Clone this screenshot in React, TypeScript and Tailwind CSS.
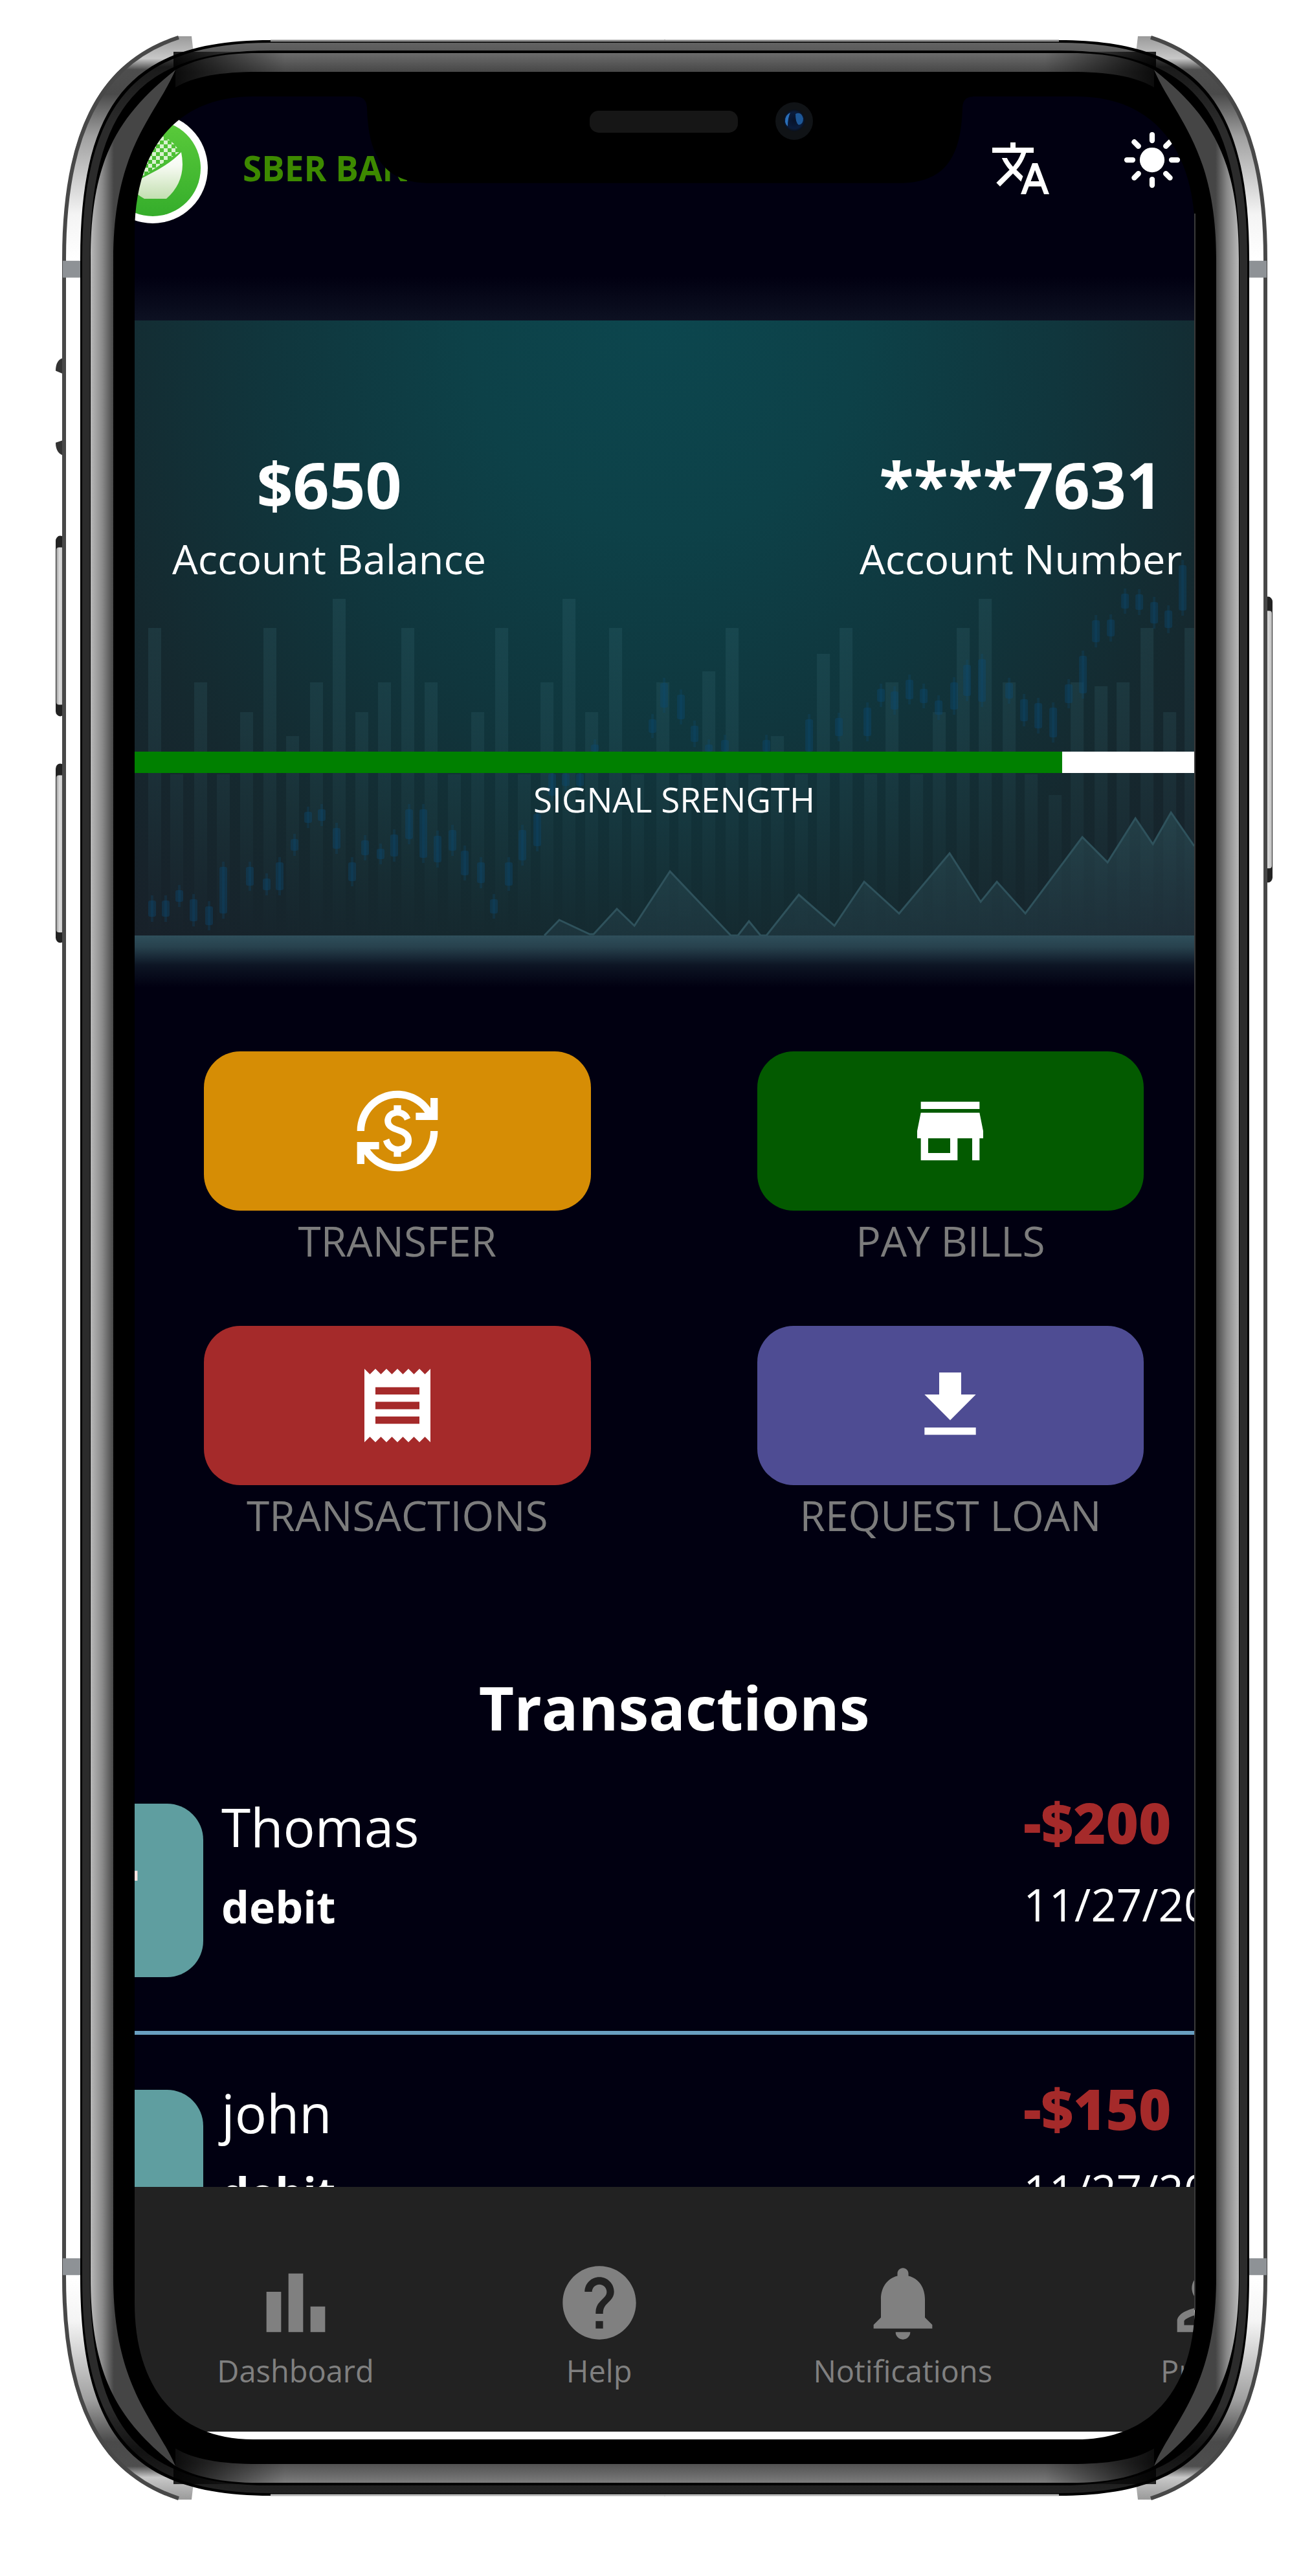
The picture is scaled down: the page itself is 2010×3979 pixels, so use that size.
import React from "react";
import { IoSunny } from "react-icons/io5";
import {
  MdCurrencyExchange,
  MdFileDownload,
  MdHelp,
  MdNotifications,
  MdPersonOutline,
  MdReceipt,
  MdStore,
  MdTranslate,
} from "react-icons/md";

/* ---------- Hero chart artwork ---------- */

// [x centre, top] of the pale vertical bars
const BARS: [number, number][] = [
  [31, 475], [209, 475], [316, 430], [422, 475], [567, 475], [671, 430], [743, 475],
  [102, 559], [173, 605], [244, 642], [281, 559], [351, 605], [386, 559], [458, 559],
  [530, 605], [637, 559], [706, 605], [65, 701], [137, 701], [494, 701], [602, 701], [777, 701],
  [923, 475], [1099, 475], [1280, 475], [1314, 430], [1564, 475], [1632, 475], [887, 542],
  [1064, 515], [1170, 559], [1243, 605], [1351, 559], [1456, 559], [1493, 565], [1527, 559],
  [1599, 605], [816, 559], [993, 642], [850, 701], [958, 701], [1030, 701], [1137, 701],
  [1208, 701], [1385, 701], [1422, 733],
];

// [x centre, top, bottom] of the blue candles
const CANDLES: [number, number, number][] = [
  [27, 896, 921], [48, 896, 921], [69, 880, 898], [91, 894, 928], [115, 905, 934],
  [137, 844, 916], [178, 844, 873], [204, 862, 880], [224, 837, 880], [247, 801, 819],
  [268, 759, 776], [289, 755, 773], [312, 784, 816], [336, 837, 866], [356, 803, 826],
  [380, 816, 832], [401, 794, 828], [424, 755, 801], [446, 755, 830], [468, 796, 837],
  [491, 787, 819], [510, 819, 857], [535, 837, 869], [555, 894, 916], [578, 837, 873],
  [599, 787, 834], [622, 762, 812], [645, 700, 734], [666, 700, 719], [688, 700, 719],
  [711, 655, 666], [800, 616, 637], [818, 560, 598], [844, 578, 616], [865, 626, 651],
  [887, 655, 666], [912, 648, 666], [976, 648, 666], [1042, 616, 666], [1088, 614, 642],
  [1132, 598, 642], [1153, 569, 589], [1174, 573, 601], [1197, 555, 585], [1219, 569, 591],
  [1242, 587, 609], [1266, 559, 601], [1286, 532, 580], [1309, 523, 589], [1351, 560, 584],
  [1374, 585, 619], [1396, 591, 630], [1419, 598, 644], [1443, 562, 591], [1465, 518, 576],
  [1485, 463, 497], [1508, 462, 488], [1530, 422, 445], [1552, 423, 447], [1575, 435, 468],
  [1597, 448, 475], [1619, 378, 448],
];

const RIDGE =
  "633,950 656,926 703,948 709,948 745,909 772,935 827,851 921,950 932,950 949,928 967,950 976,950 1026,887 1081,935 1127,867 1181,916 1259,823 1307,898 1332,867 1376,916 1464,798 1503,837 1546,769 1573,809 1601,760 1637,812";

function MarketArtwork() {
  return (
    <svg
      aria-hidden="true"
      className="absolute inset-0 h-full w-full"
      viewBox="0 0 1637 950"
      preserveAspectRatio="none"
    >
      <defs>
        <linearGradient id="barFade" x1="0" y1="430" x2="0" y2="950" gradientUnits="userSpaceOnUse">
          <stop offset="0" stopColor="#3f7580" stopOpacity="0.2" />
          <stop offset="0.4" stopColor="#3f7580" stopOpacity="0.16" />
          <stop offset="0.8" stopColor="#3f7580" stopOpacity="0.05" />
          <stop offset="1" stopColor="#3f7580" stopOpacity="0" />
        </linearGradient>
        <linearGradient id="ridgeFade" x1="0" y1="760" x2="0" y2="950" gradientUnits="userSpaceOnUse">
          <stop offset="0" stopColor="#2f5860" stopOpacity="0.5" />
          <stop offset="1" stopColor="#2a4652" stopOpacity="0.35" />
        </linearGradient>
      </defs>
      {BARS.map(([x, top]) => (
        <rect key={x} x={x - 10} y={top} width="20" height={950 - top} fill="url(#barFade)" />
      ))}
      {CANDLES.map(([x, top, bottom]) => (
        <g key={x} fill="#0b4a74">
          <rect x={x - 6} y={top} width="12" height={bottom - top} rx="3" opacity="0.38" />
          <rect x={x - 2} y={top - 8} width="4" height={bottom - top + 16} opacity="0.25" />
        </g>
      ))}
      <polygon points={RIDGE + " 1637,950"} fill="url(#ridgeFade)" />
      <polyline points={RIDGE} fill="none" stroke="#2f525c" strokeWidth="3" />
    </svg>
  );
}

/* ---------- Device frame artwork ---------- */

const QUARTER = {
  top: {
    body: "M1028 62H418C210 62 124 150 124 400V1962H208V360C208 240 265 149 391 149H547C560 149 566 153 567 166C569 235 588 283 665 283H1028Z",
    rim: "#8a8a8a",
    ring: "url(#ringTop)",
    band: "url(#bandTop)",
  },
  bottom: {
    body: "M1028 62H418C210 62 124 150 124 400V1962H208V360C208 240 265 149 391 149H1028Z",
    rim: "#b4b4b4",
    ring: "url(#ringBottom)",
    band: "url(#bandBottom)",
  },
};

function FrameQuarter({ end }: { end: "top" | "bottom" }) {
  const part = QUARTER[end];
  return (
    <g>
      {/* polished outer rail */}
      <path
        d="M97 1962V400C97 210 150 95 274 56H296L299 82C195 116 126 210 126 400V1962Z"
        fill="url(#railCurve)"
      />
      <path d="M99 1962V400C99 212 152 98 276 58" fill="none" stroke="#484848" strokeWidth="6" />
      <rect x="97" y="403" width="28" height="26" fill="#8e9296" />
      {/* black body around the screen */}
      <path d={part.body} fill="#000" />
      <path d="M1028 63H418" stroke={part.rim} strokeWidth="3" />
      <path
        d="M1028 72H418C216 72 133 160 133 400V1962"
        fill="none"
        stroke={part.ring}
        strokeWidth="12"
      />
      {/* inner bevel */}
      <path
        d="M1028 82H400C340 82 300 92 271 108V135C300 118 340 111 400 111H1028Z"
        fill={part.band}
      />
      <rect x="268" y="80" width="172" height="58" fill="url(#bandFade)" />
      <path
        d="M140 1962V400C140 250 180 180 271 108C240 180 175 230 175 400V1962Z"
        fill="url(#sideBevel)"
      />
    </g>
  );
}

function DeviceFrame() {
  return (
    <svg
      aria-hidden="true"
      className="pointer-events-none absolute inset-0 h-full w-full"
      viewBox="0 0 2010 3979"
      preserveAspectRatio="none"
    >
      <defs>
        <linearGradient id="railCurve" x1="0" y1="56" x2="0" y2="400" gradientUnits="userSpaceOnUse">
          <stop offset="0" stopColor="#9a9a9a" />
          <stop offset="0.1" stopColor="#c8c8c8" />
          <stop offset="0.15" stopColor="#4e4e4e" />
          <stop offset="0.26" stopColor="#4a4a4a" />
          <stop offset="0.45" stopColor="#a0a0a0" />
          <stop offset="0.8" stopColor="#f4f4f4" />
          <stop offset="1" stopColor="#ffffff" />
        </linearGradient>
        <linearGradient id="ringTop" x1="0" y1="62" x2="0" y2="200" gradientUnits="userSpaceOnUse">
          <stop offset="0" stopColor="#666666" />
          <stop offset="0.12" stopColor="#5a5a5a" />
          <stop offset="0.3" stopColor="#1a1a1a" />
          <stop offset="1" stopColor="#2b2b2b" />
        </linearGradient>
        <linearGradient id="ringBottom" x1="0" y1="62" x2="0" y2="200" gradientUnits="userSpaceOnUse">
          <stop offset="0" stopColor="#242424" />
          <stop offset="0.5" stopColor="#121212" />
          <stop offset="1" stopColor="#2b2b2b" />
        </linearGradient>
        <linearGradient id="bandTop" x1="0" y1="82" x2="0" y2="111" gradientUnits="userSpaceOnUse">
          <stop offset="0" stopColor="#6c6c6c" />
          <stop offset="1" stopColor="#474747" />
        </linearGradient>
        <linearGradient id="bandBottom" x1="0" y1="82" x2="0" y2="113" gradientUnits="userSpaceOnUse">
          <stop offset="0" stopColor="#7c7c7c" />
          <stop offset="1" stopColor="#4f4f4f" />
        </linearGradient>
        <linearGradient id="bandFade" x1="268" y1="0" x2="440" y2="0" gradientUnits="userSpaceOnUse">
          <stop offset="0" stopColor="#000" stopOpacity="0.85" />
          <stop offset="1" stopColor="#000" stopOpacity="0" />
        </linearGradient>
        <linearGradient id="sideBevel" x1="140" y1="0" x2="176" y2="0" gradientUnits="userSpaceOnUse">
          <stop offset="0" stopColor="#b8b8b8" />
          <stop offset="0.5" stopColor="#8a8a8a" />
          <stop offset="1" stopColor="#454545" />
        </linearGradient>
        <linearGradient id="key" x1="0" y1="0" x2="1" y2="0">
          <stop offset="0" stopColor="#9a9a9a" />
          <stop offset="0.4" stopColor="#dcdcdc" />
          <stop offset="1" stopColor="#c0c0c0" />
        </linearGradient>
        <radialGradient id="lens">
          <stop offset="0" stopColor="#071229" />
          <stop offset="0.75" stopColor="#0a1c3c" />
          <stop offset="1" stopColor="#0b1018" />
        </radialGradient>
      </defs>

      {/* hardware keys */}
      <path d="M98 553Q86 556 86 573L98 578ZM98 680L86 684Q86 700 98 704Z" fill="#333" />
      <rect x="86" y="828" width="14" height="279" rx="8" fill="#222" />
      <rect x="87" y="846" width="12" height="243" rx="4" fill="url(#key)" />
      <rect x="86" y="1180" width="14" height="277" rx="8" fill="#222" />
      <rect x="87" y="1198" width="12" height="243" rx="4" fill="url(#key)" />
      <rect x="1952" y="922" width="14" height="442" rx="8" fill="#222" />
      <rect x="1953" y="944" width="12" height="398" rx="4" fill="url(#key)" />

      <FrameQuarter end="top" />
      <g transform="matrix(-1 0 0 1 2054 0)">
        <FrameQuarter end="top" />
      </g>
      <g transform="matrix(1 0 0 -1 0 3919)">
        <FrameQuarter end="bottom" />
      </g>
      <g transform="matrix(-1 0 0 -1 2054 3919)">
        <FrameQuarter end="bottom" />
      </g>
      <rect x="1845" y="330" width="2" height="3240" fill="#3a3a3a" />

      {/* speaker and camera */}
      <rect x="911" y="171" width="229" height="34" rx="14" fill="#161616" />
      <circle cx="1227" cy="187" r="29" fill="#101316" />
      <circle cx="1227" cy="186" r="17" fill="url(#lens)" />
      <path d="M1221 174Q1212 178 1213 188Q1214 193 1217 195Q1217 182 1221 174Z" fill="#2a6fb8" />
      <path d="M1229 176Q1238 172 1241 183Q1241 192 1234 193Q1229 190 1229 176Z" fill="#1d5796" />
    </svg>
  );
}

/* ---------- App screen ---------- */

function BankLogo() {
  return (
    <svg aria-hidden="true" viewBox="0 0 170 170" className="size-[170px] shrink-0">
      <defs>
        <linearGradient id="logoGreen" x1="0" y1="0" x2="0" y2="1">
          <stop offset="0" stopColor="#5bcb3b" />
          <stop offset="1" stopColor="#35ad2b" />
        </linearGradient>
        <linearGradient id="logoDisc" x1="0" y1="0" x2="0" y2="1">
          <stop offset="0" stopColor="#ffffff" />
          <stop offset="0.3" stopColor="#f6faf2" />
          <stop offset="1" stopColor="#c3dfb0" />
        </linearGradient>
        <pattern id="logoHatch" width="12" height="12" patternUnits="userSpaceOnUse">
          <rect width="6" height="6" fill="#d9f2cf" />
          <rect x="6" y="6" width="6" height="6" fill="#d9f2cf" />
        </pattern>
      </defs>
      <circle cx="85" cy="85" r="85" fill="#fff" />
      <circle cx="85" cy="85" r="74" fill="url(#logoGreen)" />
      <path d="M38 90A48 48 0 0 1 98 34Q120 44 126 60L66 100Z" fill="url(#logoHatch)" />
      <path d="M129 60Q138 104 106 132H72Q54 122 50 108Q62 104 80 94Q112 78 129 60Z" fill="url(#logoDisc)" />
    </svg>
  );
}

function BarChartIcon({ className }: { className?: string }) {
  return (
    <svg viewBox="0 0 24 24" fill="currentColor" aria-hidden="true" className={className}>
      <path d="M4 9h4v11H4zM16 13h4v7h-4zM10 4h4v16h-4z" />
    </svg>
  );
}

const ACTIONS = [
  { label: "TRANSFER", Icon: MdCurrencyExchange, color: "bg-[#d68d05]" },
  { label: "PAY BILLS", Icon: MdStore, color: "bg-[#035a00]" },
  { label: "TRANSACTIONS", Icon: MdReceipt, color: "bg-[#a52a2a]" },
  { label: "REQUEST LOAN", Icon: MdFileDownload, color: "bg-[#4e4c93]" },
];

const TRANSACTIONS = [
  { name: "Thomas", initial: "T", kind: "debit", amount: "-$200", date: "11/27/2021" },
  { name: "john", initial: "j", kind: "debit", amount: "-$150", date: "11/27/2021" },
];

const TABS = [
  { label: "Dashboard", Icon: BarChartIcon },
  { label: "Help", Icon: MdHelp },
  { label: "Notifications", Icon: MdNotifications },
  { label: "Profile", Icon: MdPersonOutline },
];

function Header() {
  return (
    <header className="bg-[linear-gradient(to_top,#0d1122,#010011_68px)] pt-[26px] pb-[150px]">
      <div className="flex items-center">
        <div className="-ml-[57px] flex shrink-0 items-center gap-[54px]">
          <BankLogo />
          <span className="text-[53px] leading-[60px] font-bold whitespace-nowrap text-[#3d8900]">
            SBER BANK
          </span>
        </div>
        <div className="ml-auto flex items-center gap-[107px] pr-[17px] text-white">
          <button type="button" aria-label="Change language">
            <MdTranslate className="size-24" />
          </button>
          <button type="button" aria-label="Toggle theme" className="pb-[26px]">
            <IoSunny className="size-24" />
          </button>
        </div>
      </div>
    </header>
  );
}

function Hero() {
  return (
    <section className="relative bg-[radial-gradient(ellipse_62%_115%_at_50%_0%,#0c464e_0%,#0d4148_30%,#10363d_60%,#15292f_90%,#182029_120%)] pt-[203px] pb-[178px] text-white">
      <MarketArtwork />
      <div className="relative">
        <div className="flex justify-between pr-[19px] pl-[58px] text-center">
          <div>
            <p className="text-[98px] leading-[100px] font-bold">$650</p>
            <p className="mt-[25px] text-[63px] leading-[80px]">Account Balance</p>
          </div>
          <div>
            <p className="text-[98px] leading-[100px] font-bold">****7631</p>
            <p className="mt-[25px] text-[63px] leading-[80px]">Account Number</p>
          </div>
        </div>
        <div
          role="progressbar"
          aria-labelledby="signal"
          aria-valuemin={0}
          aria-valuemax={100}
          aria-valuenow={87}
          className="mt-[258px] h-[33px] bg-white"
        >
          <div className="h-full w-[87.5%] bg-[#008000]" />
        </div>
        <p id="signal" className="mt-[9px] pl-[30px] text-center text-[53px] leading-[64px]">
          SIGNAL SRENGTH
        </p>
      </div>
    </section>
  );
}

function Actions() {
  return (
    <section className="bg-[linear-gradient(to_bottom,#2f4f5b_0px,#27414d_18px,#0d1524_46px,#010011_80px)] pt-[179px]">
      <div className="grid grid-cols-2 gap-x-[257px] gap-y-[91px] pr-[78px] pl-[107px]">
        {ACTIONS.map(({ label, Icon, color }) => (
          <div key={label} className="flex flex-col items-center gap-[7px]">
            <button
              type="button"
              aria-label={label}
              className={`flex h-[246px] w-full items-center justify-center rounded-[56px] text-white ${color}`}
            >
              <Icon className="size-[136px]" />
            </button>
            <span className="text-[64px] leading-[80px] whitespace-nowrap text-[#7c7c7c]">{label}</span>
          </div>
        ))}
      </div>
    </section>
  );
}

function TransactionList() {
  return (
    <section className="pt-[206px] text-white">
      <h2 className="pl-[30px] text-center text-[94px] leading-[100px] font-bold">Transactions</h2>
      <ul className="mt-[14px] h-[677px] overflow-hidden">
        {TRANSACTIONS.map((t) => (
          <li
            key={t.name}
            className="flex items-start border-b-[6px] border-[#699fc0] pt-[85px] pb-[83px]"
          >
            <div className="-ml-[162px] h-[268px] w-[268px] shrink-0 rounded-[56px] bg-[#5f9ea0] pt-[84px] text-center text-[120px] leading-[120px] font-bold text-[#ffe4e1]">
              {t.initial}
            </div>
            <div className="ml-[28px] flex flex-1 flex-col gap-[54px]">
              <span className="text-[82px] leading-[70px]">{t.name}</span>
              <span className="text-[68px] leading-[70px] font-bold">{t.kind}</span>
            </div>
            <div className="flex w-[264px] shrink-0 flex-col gap-[62px] whitespace-nowrap">
              <span className="text-[86px] leading-[58px] font-extrabold text-[#a52a2a]">{t.amount}</span>
              <span className="text-[69px] leading-[70px]">{t.date}</span>
            </div>
          </li>
        ))}
      </ul>
    </section>
  );
}

function TabBar() {
  return (
    <nav className="flex overflow-hidden bg-[#222222] pt-[111px] pb-[64px] pl-[14px]">
      {TABS.map(({ label, Icon }) => (
        <a
          key={label}
          href="#"
          className="flex w-[28.9%] shrink-0 flex-col items-center gap-[7px] text-[#808080]"
        >
          <Icon className="size-[136px]" />
          <span className="text-[47px] leading-[60px]">{label}</span>
        </a>
      ))}
    </nav>
  );
}

export default function App() {
  return (
    <div className="relative w-full overflow-hidden bg-white pt-[149px] pr-[8.2%] pb-[209px] pl-[10.35%] font-['Open_Sans','Noto_Sans',sans-serif]">
      <main className="overflow-hidden pb-[12px]">
        <div className="bg-[#010011]">
          <Header />
          <Hero />
          <Actions />
          <TransactionList />
        </div>
        <TabBar />
      </main>
      <DeviceFrame />
    </div>
  );
}
